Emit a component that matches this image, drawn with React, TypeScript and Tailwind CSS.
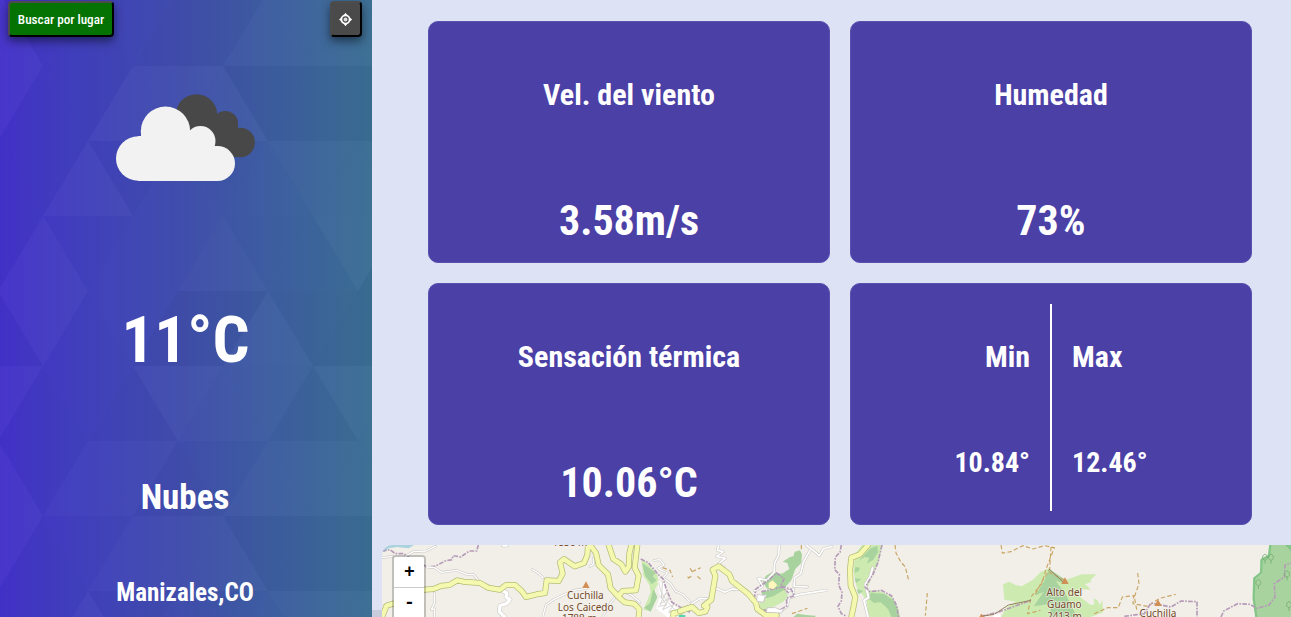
import React from 'react';

const SHADES: string[] = [
  '73343366666',
  '73377722222',
  '33735456666',
  '37455644722',
  '37452273222',
  '73437663766',
  '73663466666',
  '73466622222',
  '33735456666',
];

const TRI_W = 90;
const TRI_H = 75;

function Pattern() {
  const tris: React.ReactNode[] = [];
  SHADES.forEach((row, r) => {
    const y = -9 + r * TRI_H;
    const startsUp = r % 2 === 0;
    row.split('').forEach((c, i) => {
      const mid = -2 + i * 45;
      const up = startsUp ? i % 2 === 0 : i % 2 === 1;
      const v = Number(c) - 4.5;
      const points = up
        ? `${mid},${y} ${mid - TRI_W / 2},${y + TRI_H} ${mid + TRI_W / 2},${y + TRI_H}`
        : `${mid - TRI_W / 2},${y} ${mid + TRI_W / 2},${y} ${mid},${y + TRI_H}`;
      tris.push(
        <polygon key={`${r}-${i}`} points={points} fill={v > 0 ? '#fff' : '#000'} fillOpacity={Math.abs(v) * 0.01} />,
      );
    });
  });
  return (
    <svg className="absolute inset-0" width="372" height="617" aria-hidden="true">
      {tris}
    </svg>
  );
}

function CloudIcon() {
  return (
    <svg width="140" height="88" viewBox="0 0 140 88" aria-hidden="true">
      <g fill="#484848">
        <circle cx="80.5" cy="21" r="20.800" />
        <circle cx="109.2" cy="30" r="13" />
        <circle cx="124.2" cy="48.500" r="14.700" />
        <path d="M62 20h38l14 12 10 16v15H80Z" />
      </g>
      <g fill="#f2f2f2">
        <circle cx="22.300" cy="64.500" r="22.300" />
        <circle cx="49.500" cy="37.300" r="24.700" />
        <circle cx="84.500" cy="47" r="15" />
        <circle cx="101.500" cy="69.500" r="17.500" />
        <path d="M22 42h3V37h49l10 10 15 5h3v35H22Z" />
      </g>
    </svg>
  );
}

function Road({ d }: { d: string }) {
  return (
    <g fill="none" strokeLinejoin="round" strokeLinecap="round">
      <path d={d} stroke="#b6bd78" strokeWidth="18" />
      <path d={d} stroke="#f5f9b0" strokeWidth="13.500" />
    </g>
  );
}

function Lane({ d, w = 6 }: { d: string; w?: number }) {
  return (
    <g fill="none" strokeLinejoin="round" strokeLinecap="round">
      <path d={d} stroke="#ccc9c5" strokeWidth={w + 3.5} />
      <path d={d} stroke="#fff" strokeWidth={w} />
    </g>
  );
}

function Border({ d }: { d: string }) {
  return <path d={d} fill="none" stroke="#b59bb8" strokeWidth="5" strokeDasharray="14 4 5 4" />;
}

function Trail({ d }: { d: string }) {
  return <path d={d} fill="none" stroke="#c9a566" strokeWidth="3.500" strokeDasharray="13 7" />;
}

function Tree({ x, y }: { x: number; y: number }) {
  return <path d={`M${x} ${y}v-10c-12-3-7-18 0-18s12 15 0 18`} fill="none" stroke="#75ad72" strokeWidth="2.500" />;
}

const LABEL = "fill-[#734a2b] font-['Noto_Sans',sans-serif] text-[30px] font-normal [font-stretch:100%]";

function Label({ x, y, children }: { x: number; y: number; children: string }) {
  return (
    <text x={x} y={y} textAnchor="middle" className={LABEL} stroke="#f7f4ef" strokeOpacity="0.7" strokeWidth="5" strokeLinejoin="round" paintOrder="stroke">
      {children}
    </text>
  );
}

function MapCanvas() {
  return (
    <svg className="block" width="909" height="72" viewBox="382 545 909 72">
      <rect x="382" y="545" width="909" height="72" fill="#f2efe9" />
      <g transform="translate(380 537) scale(.33333)">
        <path d="M6 40V24h96l-16 10-36-4-24 4-12 12Z" fill="#aad3df" />
        <Border d="M6 42 30 38 46 50 72 50 84 60 110 70 140 90 165 88 195 72 215 68 220 56 242 60 268 42 290 42 295 24" />
        <Lane d="M76 58 100 44 138 42 166 28M6 62 38 58M140 90 164 92 184 106 230 100 260 112 280 112 300 136 350 156M457 98 474 108 490 122M163 168 163 200 154 218 164 216 164 240M6 208 40 196M620 154 580 160 520 188 498 204 488 240M770 24 760 28M710 176 690 200 668 240M640 64 640 82 630 88M730 164 754 174 780 196" w={4} />
        <Lane d="M370 24h10M366 160 380 168 378 180 390 188 380 200 360 206 358 224 374 240" w={10} />
        <Road d="M6 240 20 206 40 200M130 158 160 156 186 146 208 144 232 130 250 134 300 138 324 152 360 158 378 144 405 144 425 162 438 180 470 172 495 168 500 130 536 132 548 110 540 76 552 66 584 88 612 78 622 54 624 24M630 24 648 48 656 84 684 112 692 154 714 178 728 162 768 160 776 116 764 92 772 24M686 24 700 66 724 82 736 104 746 90 748 50 754 24M714 178 734 196 762 200 778 216 776 240" />
        <path d="M784 66 804 80 832 112 836 138 824 158 830 186 808 222 790 218 812 166 808 144 790 116Z" fill="#cdebb0" />
        <path d="M786 78 828 108 818 118 830 130 816 142 796 118ZM820 156 832 180 812 224 792 212 810 198Z" fill="#a9d39e" />
        <path d="m832 132 22 8 6 46 32 28 8 26H862l-34-26 12-36Z" fill="#fff" />
        <path d="m836 136 6 26 18 30 26 28M848 134l-4 50 16-18-20 36 28-20-20 36 34-16-16 24 26-8M840 176l20 28-26 4" fill="none" stroke="#d0cdc9" strokeWidth="2.500" />
        <Lane d="M822 70 840 68 852 84 834 94 862 108 850 122 872 140 886 162 908 172 930 194" w={4} />
        <Border d="M782 66 804 76 836 114 850 126 858 154 876 196 900 210 930 226" />
        <Road d="M930 212 910 218 900 226 880 228 880 240" />
        <path d="M896 234h20v6h-20z" fill="#59d5b4" />
        <Trail d="M848 92 870 100 878 120M922 120l8 2" />
        <path d="m618 133 11 20h-22Z" fill="#d08f55" />
        <Label x={616} y={186}>Cuchilla</Label>
        <Label x={617} y={221}>Los Caicedo</Label>
        <Label x={598} y={256}>1788 m</Label>
        <Label x={570} y={27}>1836 m</Label>
      </g>
      <g transform="translate(680 537) scale(.33333)">
        <path d="m344 44 16-4 6 12-2 26-18 18-12 34-18 20-26 16-30-12-12-20 10-18 20-12 10 4 18 2 22-14-6-18-14-4 22-14 10-2Z" fill="#a9d39e" />
        <path d="m246 190 38-24 36-10 4 24-14 14-30 16-34 14-8-20Z" fill="#cdebb0" />
        <path d="m244 164 36-6 24-10 12 8-36 22-30 8Z" fill="#a9d39e" />
        <path d="m340 240 12-10 26 4 28 2v4Z" fill="#a9d39e" />
        <path d="M546 24h60l-10 50-22 50-14 36 40 2 36 18 20 36 4 24h-96l-4-50-30-40-10-50 6-50Z" fill="#cdebb0" />
        <path d="m572 34 20-8 2 20-14 22-20 12 8-18-14-2-18 12 22-24ZM526 90l14 2-4 10-12 6ZM524 124l20 2-16 12ZM530 156l20 6-14 10ZM572 168l40 2 34 24 12 46h-24l-10-24-22-20-20 2-18-14Z" fill="#a9d39e" />
        <Lane d="M116 24 112 40 130 44 110 58 136 64 116 80 134 94M298 24 296 54 284 78 282 106 260 130 234 124 248 148 224 162M390 40 370 76 362 110 344 122 342 148 382 150M380 26 400 40 418 56 430 36 456 28M340 178 360 172 438 160M106 152 134 166 156 156 186 158M36 200 60 184 84 186 108 154M320 164 340 156 342 178 326 184 322 208 296 226M228 182 256 176 236 194 250 190" w={5} />
        <Lane d="M578 92 570 120 556 142 566 182 552 190 564 240" w={6} />
        <Border d="M484 24 480 46 466 60 464 98 478 112 476 144 486 166 484 192 474 208 484 230 500 238M606 24 594 76 580 110 556 150 570 164 604 160 634 176 650 206 656 240M222 186 228 156 262 132 290 108 312 126 302 146 334 158 344 176 320 184 320 208 290 224 240 218 230 196M244 164 306 150 326 168" />
        <Road d="M0 222 36 210 56 228 76 224 82 210 72 206 94 188 106 116 98 98 116 88 148 112 156 132 204 170 228 198 232 216 256 234 290 234M564 24 540 52 514 62 510 98 512 146 526 180 520 212 514 240" />
        <path d="M266 138 278 130 292 144 280 157 266 152Z" fill="#fdf6bd" />
        <path d="m232 172 24 4-6 20-20-4ZM262 212h24l14 6 12-4-8 14-46-2Z" fill="#fff" stroke="#c4b8c1" strokeWidth="2" />
        <Trail d="M24 124 34 118M36 104 62 92M30 94 38 106M52 118 62 126M645 24 648 48 662 74 676 90 686 130M742 168 736 236M336 230 382 214M364 24v20" />
        <path d="M0 234h14v6H0z" fill="#59d5b4" />
        <path d="m904 230 10 10h-16Z" fill="#d08f55" />
      </g>
      <g transform="translate(981 537) scale(.33333)">
        <path d="M66 142 84 134 104 144 122 148 156 128 178 106 204 94 226 118 256 128 302 112 346 112 328 130 332 134 312 142 322 150 330 158 294 156 300 182 330 204 340 202 338 184 350 190 356 204 364 190 366 226 330 240H60L76 212 104 194 70 188Z" fill="#cdebb0" />
        <path d="m204 96 46 30 4 14-30-8 30 40 34 68h-82l4-40-52 8 30-44-26 12 28-44Z" fill="#a9d39e" />
        <path d="M868 24h62v216H826l-10-60 6-56 20-12-4-42 26-12Z" fill="#a9d39e" />
        <path d="m868 24-4 32-22 12-2 40-20 16-2 60 8 56" fill="none" stroke="#83c687" strokeWidth="7" />
        <path d="M912 24h18v18Z" fill="#83c687" />
        <Trail d="M60 24 64 48 90 44 126 26 156 36 190 26 220 32 196 94 182 140 150 180 140 230 178 220M210 30 206 96 176 146 160 178M470 108 474 140 460 180 468 222M340 230 380 212 412 212 424 180 458 176 456 200 500 208 536 184 584 172M250 130l-46-24" />
        <Border d="M0 238 50 226 150 190M430 238 490 230 510 198 570 210 600 192 648 194 648 240M720 240 728 222 770 200 806 202 828 214 864 204 882 180 880 140 910 120 912 84 930 78" />
        <path d="m0 238 40-6 42-28 68-14M204 96l46 42" fill="none" stroke="#97805d" strokeWidth="3" />
        <circle cx="48" cy="242" r="12" fill="#fff" />
        <path d="m252 121 11 20h-22ZM531 187l11 20h-22ZM0 230l9 10H0Z" fill="#d08f55" />
        <Tree x={852} y={80} /><Tree x={870} y={80} /><Tree x={832} y={156} /><Tree x={918} y={130} /><Tree x={924} y={222} />
        <Label x={250} y={176}>Alto del</Label>
        <Label x={250} y={212}>Guamo</Label>
        <Label x={250} y={248}>2413 m</Label>
        <Label x={531} y={239}>Cuchilla</Label>
      </g>
    </svg>
  );
}

function Card({ title, value }: { title: string; value: string }) {
  return (
    <section className="flex h-[242px] flex-col items-center rounded-[10px] border border-[#5a50b0] bg-[#4a40a6] pt-[54px]">
      <h2 className="text-[30px] leading-[38px]">{title}</h2>
      <p className="mt-[81px] text-[42px] leading-[52px]">{value}</p>
    </section>
  );
}

export default function App() {
  return (
    <div className="flex h-[617px] w-[1291px] overflow-hidden bg-[#dde2f5] font-['Roboto_Condensed','Roboto',sans-serif] font-bold text-white [font-stretch:75%]">
      <aside className="relative w-[372px] shrink-0 overflow-hidden bg-linear-to-r from-[#4431ca] via-[#404eab] to-[#3b6e93]">
        <Pattern />
        <div className="relative flex h-full flex-col items-center">
          <div className="flex w-full justify-between pt-px pr-[10px] pl-2">
            <button className="h-9 w-[106px] rounded-[4px] border-2 border-t-[#4c4c4c] border-r-black border-b-black border-l-[#4c4c4c] bg-[#047304] pt-px text-[13.2px] font-medium whitespace-nowrap shadow-[0_4px_10px_rgba(0,0,0,0.5)]">
              Buscar por lugar
            </button>
            <button aria-label="Ubicación" className="flex h-9 w-8 items-center justify-center rounded-[4px] border-2 border-t-[#4c4c4c] border-r-black border-b-black border-l-[#4c4c4c] bg-[#4a4a4a] shadow-[0_4px_10px_rgba(0,0,0,0.5)]">
              <svg width="14" height="14" viewBox="0 0 14 14">
                <circle cx="6.500" cy="7.500" r="5" fill="#fff" />
                <path d="M6.500 .7 8.500 3.500h-4ZM6.500 14.300 8.500 11.500h-4ZM0 7.500 2.500 5.500v4ZM13.300 7.500 10.500 5.500v4Z" fill="#fff" />
                <circle cx="6.500" cy="7.500" r="2.600" fill="#dedede" stroke="#4a4a4a" strokeWidth="1.200" />
              </svg>
            </button>
          </div>
          <div className="mt-[57px] h-[88px]"><CloudIcon /></div>
          <p className="mt-[118px] pr-[1px] text-[65px] leading-[80px]">11°C</p>
          <p className="mt-[97px] pr-[2px] text-[35px] leading-[42px]">Nubes</p>
          <p className="mt-[59px] pr-[2px] text-[25px] leading-[30px]">Manizales,CO</p>
        </div>
      </aside>
      <main className="flex w-[919px] flex-col">
        <div className="mt-[21px] ml-[56px] grid w-[824px] grid-cols-2 gap-5">
          <Card title="Vel. del viento" value="3.58m/s" />
          <Card title="Humedad" value="73%" />
          <Card title="Sensación térmica" value="10.06°C" />
          <section className="flex h-[242px] justify-center rounded-[10px] border border-[#5a50b0] bg-[#4a40a6] pt-5">
            <div className="flex w-[199px] flex-col items-end pt-[34px] pr-5">
              <h2 className="text-[30px] leading-[38px]">Min</h2>
              <p className="mt-[70px] text-[28px] leading-[34px]">10.84°</p>
            </div>
            <div className="h-[207px] w-[2px] bg-white" />
            <div className="flex w-[199px] flex-col items-start pt-[34px] pl-5">
              <h2 className="text-[30px] leading-[38px]">Max</h2>
              <p className="mt-[70px] text-[28px] leading-[34px]">12.46°</p>
            </div>
          </section>
        </div>
        <div className="mt-5 flex h-[72px]">
          <div className="flex w-[10px] shrink-0 items-end"><div className="h-[7px] w-full bg-[#c7cbdc]" /></div>
          <div className="relative w-[909px] overflow-hidden rounded-tl-[10px]">
            <MapCanvas />
            <div className="absolute top-[10px] left-[10px] h-[76px] w-[34px] rounded-[4px] border-2 border-black/20 bg-clip-padding font-['Liberation_Mono',monospace] text-[18px] leading-[30px] text-black [font-stretch:100%]">
              <div className="flex h-[31px] items-center justify-center rounded-t-[2px] border-b border-[#ccc] bg-white pl-px">+</div>
              <div className="flex h-[30px] items-center justify-center bg-white pl-px">-</div>
            </div>
          </div>
        </div>
      </main>
    </div>
  );
}
